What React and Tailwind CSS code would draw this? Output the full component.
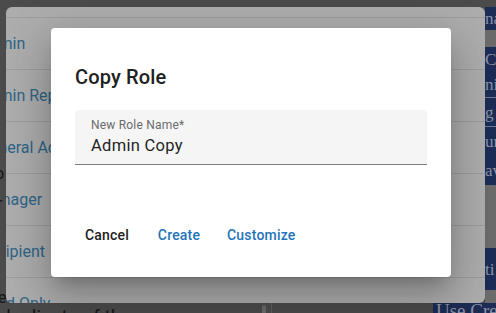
const rows = ['Admin', 'Admin Reports', 'General Admin', 'Manager', 'Recipient', 'Read Only']

function BackPanel() {
  return (
    <div className="w-[479px] h-[296px] rounded-[6px] bg-[#adadad] overflow-hidden">
      <div className="h-[11px] border-b border-[#9c9c9c]" />
      {rows.map((r) => (
        <div key={r} className="h-[52px] flex items-center border-b border-[#9c9c9c]">
          <span className="ml-[-27px] text-[16px] text-[#2f6487] whitespace-nowrap">{r}</span>
        </div>
      ))}
    </div>
  )
}

function RightStrip() {
  return (
    <div className="flex-1 flex flex-col overflow-hidden font-['Liberation_Serif',serif] text-[17px] text-[#8c93a6] leading-none whitespace-nowrap">
      <div className="h-[23px] bg-[#1c2c54] flex items-center">na</div>
      <div className="h-[17px] bg-[#6b6b6b]" />
      <div className="h-[51px] bg-[#1c2c54] flex flex-col justify-around border-b border-[#6f7890]">
        <span>Co</span>
        <span>ni</span>
      </div>
      <div className="h-[29px] bg-[#1c2c54] flex items-center border-b border-[#6f7890]">g c</div>
      <div className="h-[58px] bg-[#1c2c54] flex flex-col justify-around">
        <span>ur</span>
        <span>av</span>
      </div>
      <div className="h-[63px] bg-[#6b6b6b]" />
      <div className="h-[42px] bg-[#1c2c54] flex items-center">ti</div>
      <div className="flex-1 bg-[#6b6b6b]" />
    </div>
  )
}

function CopyRoleDialog() {
  return (
    <div className="absolute left-[51px] top-[28px] w-[400px] h-[249px] bg-white rounded-[4px] shadow-[0_11px_15px_-7px_rgba(0,0,0,0.2),0_24px_38px_3px_rgba(0,0,0,0.14),0_9px_46px_8px_rgba(0,0,0,0.12)] flex flex-col">
      <h2 className="pt-[33px] px-6 text-[20px] leading-[32px] font-medium text-[#212121] tracking-[0.15px]">
        Copy Role
      </h2>
      <div className="mt-[17px] mx-6 h-[55px] bg-[#f5f5f5] rounded-t-[4px] border-b border-[#7d7d7d] px-4 flex flex-col">
        <label className="mt-[7px] text-[12px] leading-[16px] text-[#6b6b6b] tracking-[0.2px]">New Role Name*</label>
        <input
          className="mt-[1px] bg-transparent outline-none text-[16.5px] leading-[24px] text-[#1f1f1f] tracking-[0.3px]"
          defaultValue="Admin Copy"
        />
      </div>
      <div className="mt-[52px] px-6 flex gap-2">
        <button className="min-w-16 h-9 px-2 rounded text-[14px] font-medium tracking-[0.2px] text-[#222]">Cancel</button>
        <button className="min-w-16 h-9 px-2 rounded text-[14px] font-medium tracking-[0.2px] text-[#1f74b9]">Create</button>
        <button className="min-w-16 h-9 px-2 rounded text-[14px] font-medium tracking-[0.2px] text-[#1f74b9]">Customize</button>
      </div>
    </div>
  )
}

export default function App() {
  return (
    <div className="relative w-[496px] h-[313px] overflow-hidden bg-[#4b4b4b] font-['Roboto',sans-serif]">
      <div className="flex h-[303px] pt-[7px]">
        <div className="w-[6px] overflow-hidden flex flex-col text-[16px] text-[#161616] whitespace-nowrap">
          <span className="mt-[155px] ml-[-5px]">o</span>
          <span className="mt-[6px] ml-[-3px]">r</span>
          <span className="mt-[70px] ml-[-2px]">e</span>
        </div>
        <BackPanel />
        <RightStrip />
      </div>
      <div className="h-[10px] flex overflow-hidden">
        <div className="w-[262px] overflow-hidden">
          <span className="block mt-[3px] text-[19px] leading-[22px] text-[#151515] whitespace-nowrap">duplicate of the</span>
        </div>
        <div className="w-[4px] h-[10px] mt-[2px] rounded-t bg-[#6a6a6a]" />
        <div className="w-[5px]" />
        <div className="w-px bg-[#5e5e5e]" />
        <div className="flex-1" />
        <div className="w-[63px] bg-[#1c2c54] overflow-hidden">
          <span className="block ml-[3px] mt-[-3px] font-['Liberation_Serif',serif] text-[19px] leading-[22px] text-[#8c93a6] whitespace-nowrap">Use Create</span>
        </div>
      </div>
      <CopyRoleDialog />
    </div>
  )
}
